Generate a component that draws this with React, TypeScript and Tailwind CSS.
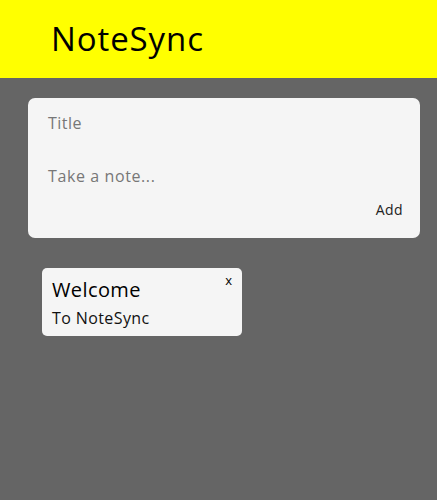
export default function App() {
  const font = { fontFamily: '"Open Sans", "DejaVu Sans", sans-serif' };
  return (
    <div className="min-h-[500px] bg-[#656565]" style={font}>
      <header className="h-[78px] bg-[#ffff00] flex items-center pl-[51px]">
        <h1 className="text-[33px] text-black font-normal tracking-[0.9px]">NoteSync</h1>
      </header>
      <div className="pl-[28px] pt-[20px]">
        <div className="w-[392px] h-[140px] rounded-[7px] bg-[#f5f5f5] pl-[20px] pr-[17px] pt-[14px] flex flex-col">
          <div className="h-[22px] text-[16px] text-[#777] leading-[22px] tracking-[0.5px]">Title</div>
          <div className="mt-[31px] h-[22px] text-[16px] text-[#777] leading-[22px] tracking-[0.6px]">Take a note...</div>
          <div className="flex justify-end mt-[12px]">
            <span className="text-[14px] text-[#222] tracking-[0.4px]">Add</span>
          </div>
        </div>
        <div className="mt-[30px] ml-[14px] w-[200px] h-[68px] rounded-[5px] bg-[#f5f5f5] relative pl-[10px] pt-[10px]">
          <div className="text-[20px] text-black font-medium leading-[24px] tracking-[0.4px]">Welcome</div>
          <div className="text-[16px] text-[#111] leading-[20px] mt-[6px] tracking-[0.4px]">To NoteSync</div>
          <span className="absolute right-[10px] top-[3px] text-[13px] text-black">x</span>
        </div>
      </div>
    </div>
  );
}
